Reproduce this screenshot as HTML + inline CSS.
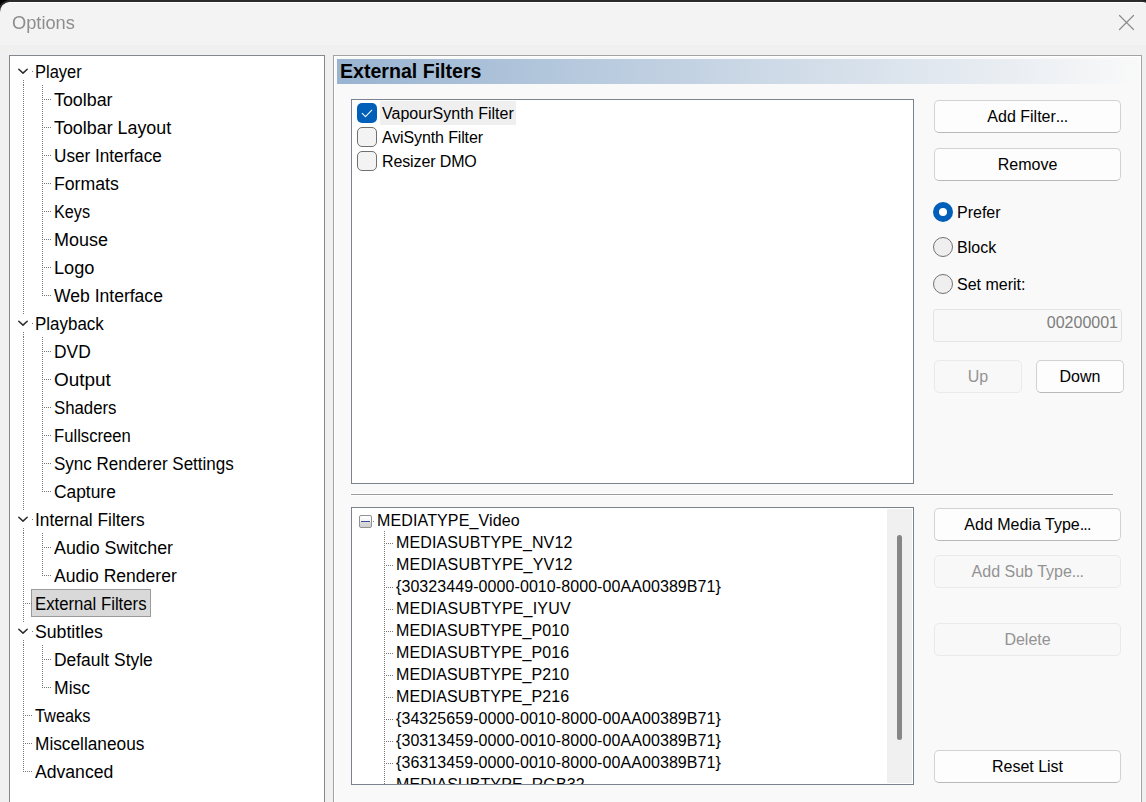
<!DOCTYPE html>
<html><head><meta charset="utf-8"><title>Options</title>
<style>
*{box-sizing:border-box}
html,body{margin:0;padding:0}
body{width:1146px;height:802px;overflow:hidden;position:relative;background:#000;font-family:"Liberation Sans",sans-serif;font-size:16px;color:#000;-webkit-font-smoothing:antialiased}
.abs{position:absolute}
.t{position:absolute;white-space:pre;line-height:1;transform-origin:0 50%}
.btn{position:absolute;height:33px;border:1px solid #d2d2d2;border-bottom-color:#b9b9b9;border-radius:5px;background:#fdfdfd;text-align:center;line-height:31px;font-size:16px;white-space:pre}
.btn.dis{border-color:#eaeaea;background:#f8f8f8;color:#939393}
.radio{position:absolute;width:20px;height:20px;border-radius:50%;border:1px solid #727272;background:#efefef}
.radio.on{border:none;background:#005fb8}
.radio.on:after{content:"";position:absolute;left:6px;top:6px;width:8px;height:8px;border-radius:50%;background:#fff}
.cb{position:absolute;width:20px;height:20px;border-radius:5px;border:1px solid #707070;background:#f3f3f3}
.cb.on{border:none;background:#005fb8}
.vd{position:absolute;width:1px;background-image:linear-gradient(#787878 50%,transparent 50%);background-size:1px 2px}
.hd{position:absolute;height:1px;background-image:linear-gradient(90deg,#787878 50%,transparent 50%);background-size:2px 1px}
</style></head><body>

<div class="abs" style="left:-2px;top:0;width:1156px;height:900px;background:#2b2b2b;border-radius:12px 12px 0 0"></div>
<div class="abs" style="left:0;top:2px;width:1152px;height:900px;background:#f3f3f3;border-top:1px solid #fff;border-radius:10px 10px 0 0"></div>
<div class="abs" style="left:0;top:45px;width:1146px;height:760px;background:#f0f0f0"></div>
<div class="t" style="left:11.6px;top:14px;font-size:18px;color:#8d8d8d;will-change:transform;transform:scaleX(1.014)">Options</div>
<svg class="abs" style="left:1117px;top:13px" width="20" height="20" viewBox="0 0 20 20"><path d="M2.5 2.5 L16.5 16.5 M16.5 2.5 L2.5 16.5" stroke="#8c8c8c" stroke-width="1.2" fill="none" stroke-linecap="round"/></svg>
<div class="abs" style="left:9px;top:55px;width:316px;height:800px;background:#fff;border:1px solid #828790"></div>
<div class="t" style="left:34.8px;top:63.8px;font-size:17.5px;transform:scaleX(0.9414)">Player</div>
<div class="t" style="left:53.8px;top:91.8px;font-size:17.5px;transform:scaleX(1.0191)">Toolbar</div>
<div class="t" style="left:53.8px;top:119.8px;font-size:17.5px;transform:scaleX(1.0208)">Toolbar Layout</div>
<div class="t" style="left:53.8px;top:147.8px;font-size:17.5px;transform:scaleX(0.9808)">User Interface</div>
<div class="t" style="left:53.8px;top:175.8px;font-size:17.5px;transform:scaleX(1.0095)">Formats</div>
<div class="t" style="left:53.8px;top:203.8px;font-size:17.5px;transform:scaleX(0.9253)">Keys</div>
<div class="t" style="left:53.8px;top:231.8px;font-size:17.5px;transform:scaleX(1.0261)">Mouse</div>
<div class="t" style="left:53.8px;top:259.8px;font-size:17.5px;transform:scaleX(1.0401)">Logo</div>
<div class="t" style="left:53.8px;top:287.8px;font-size:17.5px;transform:scaleX(1.0025)">Web Interface</div>
<div class="t" style="left:34.8px;top:315.8px;font-size:17.5px;transform:scaleX(0.9688)">Playback</div>
<div class="t" style="left:53.8px;top:343.8px;font-size:17.5px;transform:scaleX(0.9932)">DVD</div>
<div class="t" style="left:53.8px;top:371.8px;font-size:17.5px;transform:scaleX(1.0828)">Output</div>
<div class="t" style="left:53.8px;top:399.8px;font-size:17.5px;transform:scaleX(0.9588)">Shaders</div>
<div class="t" style="left:53.8px;top:427.8px;font-size:17.5px;transform:scaleX(0.9513)">Fullscreen</div>
<div class="t" style="left:53.8px;top:455.8px;font-size:17.5px;transform:scaleX(0.9728)">Sync Renderer Settings</div>
<div class="t" style="left:53.8px;top:483.8px;font-size:17.5px;transform:scaleX(0.9925)">Capture</div>
<div class="t" style="left:34.8px;top:511.8px;font-size:17.5px;transform:scaleX(0.9885)">Internal Filters</div>
<div class="t" style="left:53.8px;top:539.8px;font-size:17.5px;transform:scaleX(1.0194)">Audio Switcher</div>
<div class="t" style="left:53.8px;top:567.8px;font-size:17.5px;transform:scaleX(1.0018)">Audio Renderer</div>
<div class="abs" style="left:31px;top:589px;width:120px;height:28px;background:#d9d9d9;border:1px solid #9a9a9a"></div>
<div class="t" style="left:34.8px;top:595.8px;font-size:17.5px;transform:scaleX(0.9554)">External Filters</div>
<div class="t" style="left:34.8px;top:623.8px;font-size:17.5px;transform:scaleX(1.0101)">Subtitles</div>
<div class="t" style="left:53.8px;top:651.8px;font-size:17.5px;transform:scaleX(0.9958)">Default Style</div>
<div class="t" style="left:53.8px;top:679.8px;font-size:17.5px;transform:scaleX(1.0036)">Misc</div>
<div class="t" style="left:34.8px;top:707.8px;font-size:17.5px;transform:scaleX(0.9338)">Tweaks</div>
<div class="t" style="left:34.8px;top:735.8px;font-size:17.5px;transform:scaleX(0.9866)">Miscellaneous</div>
<div class="t" style="left:34.8px;top:763.8px;font-size:17.5px;transform:scaleX(1.0059)">Advanced</div>
<div class="vd" style="left:23px;top:85px;height:687px"></div>
<div class="abs" style="left:17px;top:62px;width:13px;height:23px;background:#fff"></div>
<div class="vd" style="left:23px;top:80px;height:5px"></div>
<svg class="abs" style="left:16.1px;top:65px" width="14" height="12" viewBox="0 0 14 12"><path d="M2.8 4.3 L7 8.1 L11.2 4.3" stroke="#2a2a2a" stroke-width="1.5" fill="none" stroke-linecap="round" stroke-linejoin="round"/></svg>
<div class="hd" style="left:32px;top:71px;width:2px"></div>
<div class="abs" style="left:17px;top:314px;width:13px;height:23px;background:#fff"></div>
<div class="vd" style="left:23px;top:332px;height:5px"></div>
<svg class="abs" style="left:16.1px;top:317px" width="14" height="12" viewBox="0 0 14 12"><path d="M2.8 4.3 L7 8.1 L11.2 4.3" stroke="#2a2a2a" stroke-width="1.5" fill="none" stroke-linecap="round" stroke-linejoin="round"/></svg>
<div class="hd" style="left:32px;top:323px;width:2px"></div>
<div class="abs" style="left:17px;top:510px;width:13px;height:23px;background:#fff"></div>
<div class="vd" style="left:23px;top:528px;height:5px"></div>
<svg class="abs" style="left:16.1px;top:513px" width="14" height="12" viewBox="0 0 14 12"><path d="M2.8 4.3 L7 8.1 L11.2 4.3" stroke="#2a2a2a" stroke-width="1.5" fill="none" stroke-linecap="round" stroke-linejoin="round"/></svg>
<div class="hd" style="left:32px;top:519px;width:2px"></div>
<div class="abs" style="left:17px;top:622px;width:13px;height:23px;background:#fff"></div>
<div class="vd" style="left:23px;top:640px;height:5px"></div>
<svg class="abs" style="left:16.1px;top:625px" width="14" height="12" viewBox="0 0 14 12"><path d="M2.8 4.3 L7 8.1 L11.2 4.3" stroke="#2a2a2a" stroke-width="1.5" fill="none" stroke-linecap="round" stroke-linejoin="round"/></svg>
<div class="hd" style="left:32px;top:631px;width:2px"></div>
<div class="hd" style="left:23px;top:603px;width:10px"></div>
<div class="hd" style="left:23px;top:715px;width:10px"></div>
<div class="hd" style="left:23px;top:743px;width:10px"></div>
<div class="hd" style="left:23px;top:771px;width:10px"></div>
<div class="vd" style="left:42px;top:85px;height:211px"></div>
<div class="hd" style="left:42px;top:99px;width:10px"></div>
<div class="hd" style="left:42px;top:127px;width:10px"></div>
<div class="hd" style="left:42px;top:155px;width:10px"></div>
<div class="hd" style="left:42px;top:183px;width:10px"></div>
<div class="hd" style="left:42px;top:211px;width:10px"></div>
<div class="hd" style="left:42px;top:239px;width:10px"></div>
<div class="hd" style="left:42px;top:267px;width:10px"></div>
<div class="hd" style="left:42px;top:295px;width:10px"></div>
<div class="vd" style="left:42px;top:337px;height:155px"></div>
<div class="hd" style="left:42px;top:351px;width:10px"></div>
<div class="hd" style="left:42px;top:379px;width:10px"></div>
<div class="hd" style="left:42px;top:407px;width:10px"></div>
<div class="hd" style="left:42px;top:435px;width:10px"></div>
<div class="hd" style="left:42px;top:463px;width:10px"></div>
<div class="hd" style="left:42px;top:491px;width:10px"></div>
<div class="vd" style="left:42px;top:533px;height:43px"></div>
<div class="hd" style="left:42px;top:547px;width:10px"></div>
<div class="hd" style="left:42px;top:575px;width:10px"></div>
<div class="vd" style="left:42px;top:645px;height:43px"></div>
<div class="hd" style="left:42px;top:659px;width:10px"></div>
<div class="hd" style="left:42px;top:687px;width:10px"></div>
<div class="abs" style="left:333px;top:55px;width:809px;height:800px;background:#f9f9f9;border:1px solid #a3a3a3;box-shadow:inset 1px 1px 0 #fff, inset -1px 0 0 #fff"></div>
<div class="abs" style="left:337px;top:59px;width:801px;height:25px;background:linear-gradient(90deg,#99b4d1 0%,#f9f9f9 100%)"></div>
<div class="t" style="left:339.9px;top:61px;font-size:20px;font-weight:bold;transform:scaleX(0.9791)">External Filters</div>
<div class="abs" style="left:351px;top:99px;width:563px;height:385px;background:#fff;border:1px solid #7b838f"></div>
<div class="abs" style="left:380px;top:101px;width:136px;height:24px;background:#efefef"></div>
<div class="cb on" style="left:357px;top:103px"><svg width="20" height="20" viewBox="0 0 20 20" style="position:absolute;left:0;top:0"><path d="M5.2 10.4 L8.5 13.6 L14.8 7.2" stroke="#fff" stroke-width="1.05" fill="none" stroke-linecap="round" stroke-linejoin="round"/></svg></div>
<div class="cb" style="left:357px;top:127px"></div>
<div class="cb" style="left:357px;top:151px"></div>
<div class="t" style="left:382px;top:106px;font-size:16px;letter-spacing:0.03px">VapourSynth Filter</div>
<div class="t" style="left:382px;top:130px;font-size:16px;letter-spacing:-0.13px">AviSynth Filter</div>
<div class="t" style="left:382px;top:154px;font-size:16px;letter-spacing:-0.12px">Resizer DMO</div>
<div class="btn" style="left:934px;top:100px;width:187px">Add Filter<span style="letter-spacing:-0.5px">...</span></div>
<div class="btn" style="left:934px;top:148px;width:187px">Remove</div>
<div class="radio on" style="left:933px;top:202px"></div>
<div class="radio" style="left:933px;top:237px"></div>
<div class="radio" style="left:933px;top:274px"></div>
<div class="t" style="left:957px;top:205px;font-size:16px">Prefer</div>
<div class="t" style="left:957px;top:240px;font-size:16px">Block</div>
<div class="t" style="left:957px;top:277px;font-size:16px">Set merit:</div>
<div class="abs" style="left:933px;top:309px;width:189px;height:33px;border:1px solid #e4e4e4;border-radius:3px;background:#f8f8f8;color:#7d7d7d;text-align:right;padding-right:3px;line-height:25px;font-size:16px">00200001</div>
<div class="btn dis" style="left:934px;top:360px;width:88px">Up</div>
<div class="btn" style="left:1036px;top:360px;width:88px">Down</div>
<div class="abs" style="left:350px;top:493px;width:764px;height:3px;background:#fff"></div>
<div class="abs" style="left:351px;top:494px;width:762px;height:1px;background:#9c9c9c"></div>
<div class="abs" style="left:351px;top:507px;width:563px;height:278px;background:#fff;border:1px solid #7a828e;overflow:hidden">
<div class="abs" style="left:535px;top:1px;width:25px;height:274px;background:#f0f0f0"></div>
<div class="abs" style="left:545px;top:27px;width:5px;height:205px;background:#868686;border-radius:2.5px"></div>
</div>
<div class="abs" style="left:359px;top:515px;width:13px;height:13px;border:1px solid #919191;border-radius:2px;background:linear-gradient(#fff 0%,#f2f2f2 50%,#dcdcdc 51%,#d0d0d0 100%)"><div class="abs" style="left:1px;top:5px;width:9px;height:1px;background:#3a4ba0"></div></div>
<div class="hd" style="left:373px;top:521px;width:2px"></div>
<div class="t" style="left:377px;top:513px;font-size:16px;letter-spacing:0.13px">MEDIATYPE_Video</div>
<div class="abs" style="left:352px;top:508px;width:534px;height:276px;overflow:hidden">
<div class="vd" style="left:32px;top:23px;height:260px"></div>
<div class="hd" style="left:32px;top:35px;width:10px"></div>
<div class="t" style="left:44px;top:27px;font-size:16px;letter-spacing:0.129px">MEDIASUBTYPE_NV12</div>
<div class="hd" style="left:32px;top:57px;width:10px"></div>
<div class="t" style="left:44px;top:49px;font-size:16px;letter-spacing:0.188px">MEDIASUBTYPE_YV12</div>
<div class="hd" style="left:32px;top:79px;width:10px"></div>
<div class="t" style="left:44px;top:71px;font-size:16px;letter-spacing:0.076px">{30323449-0000-0010-8000-00AA00389B71}</div>
<div class="hd" style="left:32px;top:101px;width:10px"></div>
<div class="t" style="left:44px;top:93px;font-size:16px;letter-spacing:0.188px">MEDIASUBTYPE_IYUV</div>
<div class="hd" style="left:32px;top:123px;width:10px"></div>
<div class="t" style="left:44px;top:115px;font-size:16px;letter-spacing:0.088px">MEDIASUBTYPE_P010</div>
<div class="hd" style="left:32px;top:145px;width:10px"></div>
<div class="t" style="left:44px;top:137px;font-size:16px;letter-spacing:0.088px">MEDIASUBTYPE_P016</div>
<div class="hd" style="left:32px;top:167px;width:10px"></div>
<div class="t" style="left:44px;top:159px;font-size:16px;letter-spacing:0.088px">MEDIASUBTYPE_P210</div>
<div class="hd" style="left:32px;top:189px;width:10px"></div>
<div class="t" style="left:44px;top:181px;font-size:16px;letter-spacing:0.088px">MEDIASUBTYPE_P216</div>
<div class="hd" style="left:32px;top:211px;width:10px"></div>
<div class="t" style="left:44px;top:203px;font-size:16px;letter-spacing:0.076px">{34325659-0000-0010-8000-00AA00389B71}</div>
<div class="hd" style="left:32px;top:233px;width:10px"></div>
<div class="t" style="left:44px;top:225px;font-size:16px;letter-spacing:0.076px">{30313459-0000-0010-8000-00AA00389B71}</div>
<div class="hd" style="left:32px;top:255px;width:10px"></div>
<div class="t" style="left:44px;top:247px;font-size:16px;letter-spacing:0.076px">{36313459-0000-0010-8000-00AA00389B71}</div>
<div class="hd" style="left:32px;top:277px;width:10px"></div>
<div class="t" style="left:44px;top:269px;font-size:16px;letter-spacing:0.111px">MEDIASUBTYPE_RGB32</div>
</div>
<div class="btn" style="left:934px;top:508px;width:187px">Add Media Type<span style="letter-spacing:-0.8px">...</span></div>
<div class="btn dis" style="left:934px;top:555px;width:187px">Add Sub Type<span style="letter-spacing:-0.6px">...</span></div>
<div class="btn dis" style="left:934px;top:623px;width:187px">Delete</div>
<div class="btn" style="left:934px;top:750px;width:187px">Reset List</div>
</body></html>
